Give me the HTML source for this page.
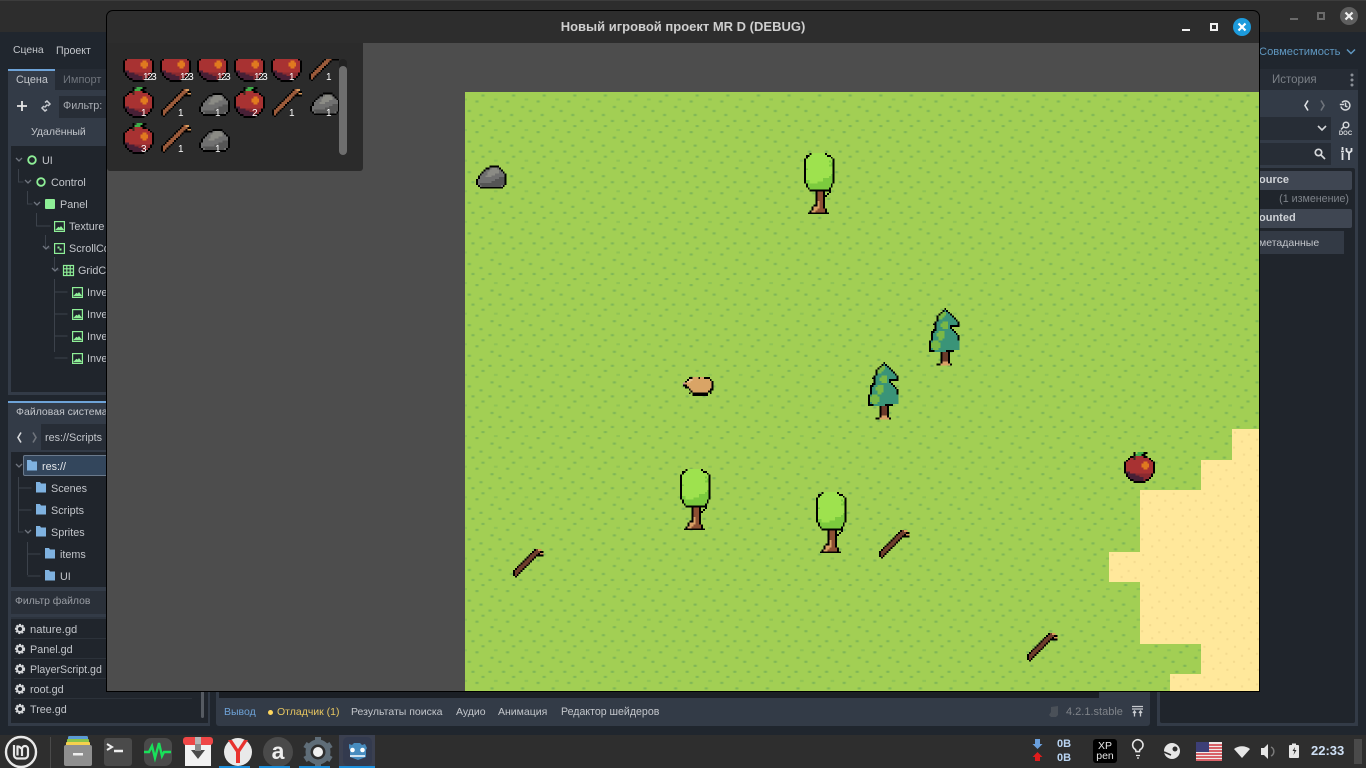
<!DOCTYPE html>
<html lang="ru"><head><meta charset="utf-8"><title>Godot</title>
<style>
html,body{margin:0;padding:0;width:1366px;height:768px;overflow:hidden;background:#20262e;font-family:"Liberation Sans","Noto Sans CJK SC",sans-serif}
.a{position:absolute}
.t{position:absolute;font-size:10.8px;line-height:14px;white-space:nowrap;color:#c3c6cb}
.d{color:#858a92}
svg{position:absolute;overflow:visible}
.s{shape-rendering:crispEdges}
.n{position:absolute;color:#fff;font-size:10px;line-height:10px}
.m{letter-spacing:-1.500px}
</style></head><body>
<svg width="0" height="0" style="position:absolute">
<defs>
<symbol id="apple" viewBox="0 0 16 16">
<g fill="none" stroke-width="1">
<path stroke="#a83232" d="M4 2.500h8M3 3.500h10M2 4.500h12M1 5.500h14M1 6.500h14M1 7.500h14M1 8.500h14M1 9.500h14M1 10.500h14M2 11.500h12M2 12.500h12M3 13.500h10M5 14.500h6"/>
<path stroke="#8a2a30" d="M3 11.500h11M3 12.500h11M6 13.500h7M9 14.500h2"/>
<path stroke="#472036" d="M1 10.500h2M2 11.500h4M2 12.500h6M3 13.500h7M5 14.500h5"/>
<path stroke="#e07a1f" d="M10 5.500h2M9 6.500h4M9 7.500h4M10 8.500h2"/>
<path stroke="#000" d="M5 .5h1M10 .5h2M5 1.500h1M9 1.500h2M3 2.500h3M10 2.500h2M2 3.500h1M13 3.500h1M1 4.500h1M14 4.500h1M0 5.500h1M15 5.500h1M0 6.500h1M15 6.500h1M0 7.500h1M15 7.500h1M0 8.500h1M15 8.500h1M0 9.500h1M15 9.500h1M0 10.500h1M15 10.500h1M1 11.500h1M14 11.500h1M1 12.500h1M14 12.500h1M2 13.500h1M13 13.500h1M3 14.500h2M11 14.500h2M5 15.500h6"/>
<path stroke="#3fae4a" d="M7 .5h3M6 1.500h3"/>
<path stroke="#3b2a20" d="M5 2.500h1M5 3.500h1"/>
</g></symbol>
<symbol id="stick" viewBox="0 0 16 16">
<g fill="none">
<path stroke="#000" d="M11 .5h1M10 1.500h1M14 1.500h2M9 2.500h1M13 2.500h1M8 3.500h1M12 3.500h4M7 4.500h1M11 4.500h1M6 5.500h1M10 5.500h1M5 6.500h1M9 6.500h1M4 7.500h1M8 7.500h1M3 8.500h1M7 8.500h1M2 9.500h1M6 9.500h1M1 10.500h1M5 10.500h1M0 11.500h1M4 11.500h1M0 12.500h1M3 12.500h1M0 13.500h1M2 13.500h1M1 14.500h1"/>
<path stroke="currentColor" d="M12 .5h3M11 1.500h3M10 2.500h3M9 3.500h3M8 4.500h3M7 5.500h3M6 6.500h3M5 7.500h3M4 8.500h3M3 9.500h3M2 10.500h3M1 11.500h3M1 12.500h2M1 13.500h1"/>
<path stroke="#d79a5c" d="M13 .5h2M14 2.500h2"/>
</g></symbol>
<symbol id="rock" viewBox="0 0 16 16">
<g fill="none">
<path stroke="#707070" d="M7 4.500h5M5 5.500h8M4 6.500h10M3 7.500h12M2 8.500h13M2 9.500h13M1 10.500h14M1 11.500h14M1 12.500h14M2 13.500h12"/>
<path stroke="#8b8b85" d="M8 4.500h3M7 5.500h5M6 6.500h6M6 7.500h4M5 8.500h3"/>
<path stroke="#555" d="M12 9.500h3M10 10.500h5M8 11.500h7M2 12.500h13M3 13.500h10"/>
<path stroke="#000" d="M7 3.500h5M5 4.500h2M12 4.500h1M4 5.500h1M13 5.500h1M3 6.500h1M14 6.500h1M2 7.500h1M15 7.500h1M1 8.500h1M15 8.500h1M1 9.500h1M15 9.500h1M0 10.500h1M15 10.500h1M0 11.500h1M15 11.500h1M0 12.500h1M15 12.500h1M1 13.500h1M14 13.500h1M2 14.500h12"/>
</g></symbol>
<symbol id="tree" viewBox="0 0 16 32">
<g fill="none">
<path stroke="#9ee24e" d="M4 .5h7M3 1.500h9M2 2.500h12M1 3.500h14M1 4.500h14M1 5.500h14M1 6.500h14M1 7.500h14M1 8.500h14M1 9.500h14M1 10.500h14M1 11.500h14M1 12.500h14M1 13.500h14"/>
<path stroke="#7ccb3e" d="M13 4.500h1M14 5.500h1M13 6.500h2M1 8.500h1M14 11.500h1M13 12.500h2M10 13.500h5M1 14.500h14M1 15.500h14M2 16.500h12M2 17.500h12M3 18.500h10"/>
<path stroke="#9ee24e" d="M3 14.500h7M3 15.500h4"/>
<path stroke="#000" d="M3 .5h1M11 .5h1M1 1.500h2M12 1.500h2M1 2.500h1M14 2.500h1M0 3.500h1M15 3.500h1M0 4.500h1M15 4.500h1M0 5.500h1M15 5.500h1M0 6.500h1M15 6.500h1M0 7.500h1M15 7.500h1M0 8.500h1M15 8.500h1M0 9.500h1M15 9.500h1M0 10.500h1M15 10.500h1M0 11.500h1M15 11.500h1M0 12.500h1M15 12.500h1M0 13.500h1M15 13.500h1M0 14.500h1M15 14.500h1M0 15.500h1M15 15.500h1M1 16.500h1M14 16.500h1M1 17.500h1M14 17.500h1M2 18.500h1M13 18.500h1M3 19.500h11"/>
<path stroke="#8c4f33" d="M7 20.500h3M7 21.500h3M7 22.500h3M7 23.500h3M7 24.500h3M8 25.500h2M8 26.500h2M8 27.500h2M8 28.500h2M7 29.500h4M6 30.500h5"/>
<path stroke="#d9a066" d="M7 25.500h1M7 26.500h1M7 27.500h1M5 28.500h3M5 29.500h2M4 30.500h2"/>
<path stroke="#000" d="M6 20.500h1M10 20.500h1M13 20.500h1M6 21.500h1M10 21.500h1M12 21.500h1M6 22.500h1M10 22.500h2M6 23.500h1M10 23.500h1M6 24.500h1M10 24.500h1M6 25.500h1M10 25.500h1M6 26.500h1M10 26.500h1M5 27.500h2M10 27.500h1M4 28.500h1M10 28.500h1M4 29.500h1M11 29.500h1M3 30.500h1M11 30.500h1M2 31.500h11"/>
</g></symbol>
<symbol id="pine" viewBox="0 0 16 32">
<g fill="none">
<path stroke="#3a9478" d="M8 1.500h1M7 2.500h3M6 3.500h5M5 4.500h7M5 5.500h8M5 6.500h9M4 7.500h11M4 8.500h11M4 9.500h7M4 10.500h7M4 11.500h8M3 12.500h10M2 13.500h12M2 14.500h13M2 15.500h13M2 16.500h13M1 17.500h15M1 18.500h15M1 19.500h15M1 20.500h15M1 21.500h15M3 22.500h6"/>
<path stroke="#7ab845" d="M7 2.500h2M6 3.500h3M5 4.500h3M5 5.500h2M7 7.500h3M6 8.500h4M6 9.500h4M7 10.500h3M5 12.500h3M4 13.500h4M4 14.500h4M5 15.500h3M5 16.500h2M2 17.500h3M1 18.500h5M1 19.500h5M1 20.500h5M2 21.500h3"/>
<path stroke="#000" d="M8 .5h1M7 1.500h1M9 1.500h1M6 2.500h1M10 2.500h1M5 3.500h1M11 3.500h1M4 4.500h1M12 4.500h1M4 5.500h1M13 5.500h1M4 6.500h1M14 6.500h1M3 7.500h1M15 7.500h1M2 8.500h2M15 8.500h1M3 9.500h1M11 9.500h5M3 10.500h1M11 10.500h1M2 11.500h2M12 11.500h1M1 12.500h2M13 12.500h1M1 13.500h1M14 13.500h1M1 14.500h1M15 14.500h1M1 15.500h1M15 15.500h1M1 16.500h1M15 16.500h1M0 17.500h1M0 18.500h1M0 19.500h1M0 20.500h1M0 21.500h1M0 22.500h3M9 22.500h4M6 23.500h1M10 23.500h1"/>
<path stroke="#6b3a2a" d="M7 23.500h3M7 24.500h3M7 25.500h3M7 26.500h3M7 27.500h3"/>
<path stroke="#000" d="M6 24.500h1M10 24.500h1M6 25.500h1M10 25.500h1M6 26.500h1M10 26.500h1M6 27.500h1M10 27.500h1M6 28.500h1M10 28.500h1M4 29.500h2M11 29.500h1"/>
<path stroke="#d9a066" d="M7 28.500h3M6 29.500h5"/>
</g></symbol>
<symbol id="potato" viewBox="0 0 16 10">
<g fill="none">
<path stroke="#d9a466" d="M5 .5h6M3 1.500h11M2 2.500h13M1 3.500h14M2 4.500h13M2 5.500h13M4 6.500h10M4 7.500h10"/>
<path stroke="#eac090" d="M3 1.500h2M2 2.500h2"/>
<path stroke="#000" d="M3 .5h2M8 .5h1M11 .5h3M2 1.500h1M14 1.500h1M1 2.500h1M15 2.500h1M15 3.500h1M0 4.500h2M15 4.500h1M15 5.500h1M1 5.500h2M15 6.500h0M3 6.500h1M14 6.500h2M4 7.500h1M13 7.500h2M3 8.500h1M5 8.500h8M14 8.500h1M5 9.500h8"/>
<path stroke="#c68f98" d="M0 3.500h1"/>
</g></symbol>
<pattern id="grass" x="465" y="92" width="30.6" height="30.6" patternUnits="userSpaceOnUse">
<rect width="30.6" height="30.6" fill="#a2cf54"/>
<g fill="#8fc355"><rect x="16" y="2.500" width="4" height="2"/><rect x="29" y="6.500" width="1.600" height="2"/><rect x="0" y="6.500" width="2" height="2"/><rect x="10" y="8.500" width="4" height="2"/><rect x="25" y="14" width="4" height="2"/><rect x="2.300" y="18" width="4" height="2"/><rect x="14" y="22" width="4" height="2"/><rect x="6" y="28" width="4" height="2"/><rect x="23" y="28" width="4" height="2"/></g>
<g fill="#7fb656"><rect x="17" y="2.500" width="2" height="2"/><rect x="11" y="8.500" width="2" height="2"/><rect x="26" y="14" width="2" height="2"/><rect x="3.300" y="18" width="2" height="2"/><rect x="15" y="22" width="2" height="2"/><rect x="7" y="28" width="2" height="2"/><rect x="24" y="28" width="2" height="2"/></g>
</pattern>
<pattern id="sand" x="465" y="92" width="30.6" height="30.6" patternUnits="userSpaceOnUse">
<rect width="30.6" height="30.6" fill="#ffe89b"/>
<g fill="#f4da8e"><rect x="4" y="3" width="2" height="2"/><rect x="18" y="5" width="2" height="2"/><rect x="26" y="10" width="2" height="2"/><rect x="11" y="12" width="2" height="2"/><rect x="3" y="18" width="2" height="2"/><rect x="20" y="19" width="2" height="2"/><rect x="13" y="25" width="2" height="2"/><rect x="27" y="26" width="2" height="2"/></g>
</pattern>
</defs></svg>

<!-- Desktop title bar -->
<div class="a" style="left:0;top:0;width:1366px;height:32px;background:#2d2d2d;border-top:1px solid #3c3c3c;box-sizing:border-box"></div>
<div class="a" style="left:1290px;top:18px;width:8px;height:2px;background:#6a6a6a"></div>
<div class="a" style="left:1317px;top:12px;width:8px;height:8px;box-sizing:border-box;border:2px solid #6a6a6a"></div>
<div class="a" style="left:1340px;top:7px;width:18px;height:18px;border-radius:50%;background:#5f5f5f"></div>
<svg style="left:1340px;top:7px" width="18" height="18"><path d="M5.500 5.500l7 7M12.500 5.500l-7 7" stroke="#f0f0f0" stroke-width="2.200"/></svg>

<!-- Editor background -->
<div class="a" style="left:0;top:32px;width:1366px;height:703px;background:#20262e"></div>
<div class="t" style="left:13px;top:44px;font-size:10.400px">Сцена</div>
<div class="t" style="left:56px;top:44px;font-size:10.600px">Проект</div>
<div class="t" style="left:1259px;top:45px;font-size:11.200px;color:#5f97c0">Совместимость</div>
<svg style="left:1346px;top:48px" width="10" height="8"><path d="M1 1.500l4 4 4-4" fill="none" stroke="#5f97c0" stroke-width="1.500"/></svg>

<!-- Left dock: scene -->
<div class="a" style="left:8px;top:69px;width:202px;height:326px;background:#333b47"></div>
<div class="a" style="left:55px;top:69px;width:155px;height:21px;background:#262c35"></div>
<div class="a" style="left:8px;top:69px;width:47px;height:2px;background:#6ea3d8"></div>
<div class="t" style="left:16px;top:73px">Сцена</div>
<div class="t d" style="left:63px;top:73px;color:#6f747c;font-size:11px">Импорт</div>
<svg style="left:16px;top:100px" width="12" height="12"><path d="M6 1v10M1 6h10" stroke="#e6e6e6" stroke-width="1.800"/></svg>
<svg style="left:40px;top:100px" width="12" height="12" fill="none" stroke="#c9ccd1" stroke-width="1.500"><path d="M5 2.500l2-1.500 3 3-2 2M7 9.500l-2 1.500-3-3 2-2M4.500 7.500l3-3"/></svg>
<div class="a" style="left:59px;top:96px;width:60px;height:22px;background:#272d36"></div>
<div class="t" style="left:63px;top:99px;color:#a9adb3">Фильтр:</div>
<div class="t" style="left:31px;top:125px;font-size:10.500px">Удалённый</div>
<div class="a" style="left:11px;top:146px;width:196px;height:246px;background:#20252c"></div>

<svg width="110" height="240" style="left:0;top:140px" fill="none" stroke="#3c424b" stroke-width="1">
<path d="M18.500 29v13h5M27.500 51v13h5M36.500 73v13h14M45.500 95v13h5M54.500 117v13h5M54.500 139v73M54.500 152h13M54.500 174h13M54.500 196h13M54.500 218h13"/>
</svg>
<svg width="110" height="220" style="left:0;top:150px" fill="none">
<path d="M16 8l3 3 3-3M25 30l3 3 3-3M34 52l3 3 3-3M43 96l3 3 3-3M52 118l3 3 3-3" stroke="#707680" stroke-width="1.300"/>
<circle cx="32" cy="10" r="3.800" stroke="#8eef97" stroke-width="1.800"/>
<circle cx="41" cy="32" r="3.800" stroke="#8eef97" stroke-width="1.800"/>
<rect x="45" y="49" width="10" height="10" rx="1" fill="#8eef97"/>
<g stroke="#8eef97" stroke-width="1.200">
<rect x="54.600" y="71.600" width="9.800" height="9.800"/><path d="M56.500 79.500l2-2 1.500 1 1-1.500 2 2.500z" fill="#8eef97"/>
<rect x="54.600" y="93.600" width="9.800" height="9.800"/><rect x="57.500" y="96.500" width="2" height="2" fill="#8eef97" stroke="none"/><rect x="59.500" y="98.500" width="2" height="2" fill="#8eef97" stroke="none"/>
<path d="M63.500 115.500h10v10h-10zM66.800 115.500v10M70.200 115.500v10M63.500 118.800h10M63.500 122.200h10"/>
<rect x="72.600" y="137.600" width="9.800" height="9.800"/><path d="M74.500 145.500l2-2 1.500 1 1-1.500 2 2.500z" fill="#8eef97"/>
<rect x="72.600" y="159.600" width="9.800" height="9.800"/><path d="M74.500 167.500l2-2 1.500 1 1-1.500 2 2.500z" fill="#8eef97"/>
<rect x="72.600" y="181.600" width="9.800" height="9.800"/><path d="M74.500 189.500l2-2 1.500 1 1-1.500 2 2.500z" fill="#8eef97"/>
<rect x="72.600" y="203.600" width="9.800" height="9.800"/><path d="M74.500 211.500l2-2 1.500 1 1-1.500 2 2.500z" fill="#8eef97"/>
</g></svg>
<div class="t" style="left:42px;top:154px">UI</div>
<div class="t" style="left:51px;top:176px">Control</div>
<div class="t" style="left:60px;top:198px">Panel</div>
<div class="t" style="left:69px;top:220px">Texture</div>
<div class="t" style="left:69px;top:242px">ScrollCo</div>
<div class="t" style="left:78px;top:264px">GridCo</div>
<div class="t" style="left:87px;top:286px">Inve</div>
<div class="t" style="left:87px;top:308px">Inve</div>
<div class="t" style="left:87px;top:330px">Inve</div>
<div class="t" style="left:87px;top:352px">Inve</div>

<!-- Left dock: filesystem -->
<div class="a" style="left:8px;top:401px;width:202px;height:325px;background:#333b47"></div>
<div class="a" style="left:8px;top:401px;width:100px;height:2px;background:#6ea3d8"></div>
<div class="t" style="left:16px;top:405px;font-size:10.500px">Файловая система</div>
<svg style="left:15px;top:431px" width="24" height="13" fill="none" stroke-width="1.600"><path d="M6 1.500l-3 5 3 5" stroke="#d8dadd"/><path d="M18 1.500l3 5-3 5" stroke="#6f747c"/></svg>
<div class="a" style="left:41px;top:424px;width:70px;height:26px;background:#272d36"></div>
<div class="t" style="left:45px;top:431px">res://Scripts</div>
<div class="a" style="left:11px;top:452px;width:196px;height:135px;background:#20252c"></div>
<div class="a" style="left:23px;top:455px;width:90px;height:21px;box-sizing:border-box;background:#33465c;border:1px solid #6b7a8c;border-radius:2px"></div>
<svg width="110" height="130" style="left:0;top:455px" fill="none">
<path d="M16 9l3 3 3-3M25 75l3 3 3-3" stroke="#707680" stroke-width="1.300"/>
<path d="M18.500 22v55h5M18.500 33h13M18.500 55h13M27.500 87v33M27.500 99h13M27.500 121h13" stroke="#3c424b"/>
<g fill="#7fb2e0"><path d="M27 5h4l1 1.500h5v9H27z"/><path d="M36 27h4l1 1.500h5v9H36z"/><path d="M36 49h4l1 1.500h5v9H36z"/><path d="M36 71h4l1 1.500h5v9H36z"/><path d="M45 93h4l1 1.500h5v9H45z"/><path d="M45 115h4l1 1.500h5v9H45z"/></g>
</svg>
<div class="t" style="left:42px;top:460px;color:#e6e8ea">res://</div>
<div class="t" style="left:51px;top:482px">Scenes</div>
<div class="t" style="left:51px;top:504px">Scripts</div>
<div class="t" style="left:51px;top:526px">Sprites</div>
<div class="t" style="left:60px;top:548px">items</div>
<div class="t" style="left:60px;top:570px">UI</div>
<div class="a" style="left:11px;top:591px;width:196px;height:23px;background:#2a3039"></div>
<div class="t" style="left:15px;top:595px;color:#9a9ea5;font-size:10.400px">Фильтр файлов</div>
<div class="a" style="left:11px;top:617px;width:197px;height:106px;background:#20252c;border-top:2px solid #2c333d;box-sizing:border-box"></div>
<div class="a" style="left:14px;top:638px;width:178px;height:1px;background:#2c323a"></div>
<div class="a" style="left:14px;top:658px;width:178px;height:1px;background:#2c323a"></div>
<div class="a" style="left:14px;top:678px;width:178px;height:1px;background:#2c323a"></div>
<div class="a" style="left:14px;top:698px;width:178px;height:1px;background:#2c323a"></div>
<div class="a" style="left:201px;top:690px;width:3px;height:28px;background:#565b62;border-radius:2px"></div>
<svg width="30" height="100" style="left:10px;top:619px">
<g fill="none" stroke="#d6d8db" stroke-dasharray="2 1.100" stroke-width="1.800"><circle cx="10" cy="10" r="4.200"/><circle cx="10" cy="30" r="4.200"/><circle cx="10" cy="50" r="4.200"/><circle cx="10" cy="70" r="4.200"/><circle cx="10" cy="90" r="4.200"/></g>
<g fill="none" stroke="#d6d8db" stroke-width="2"><circle cx="10" cy="10" r="3"/><circle cx="10" cy="30" r="3"/><circle cx="10" cy="50" r="3"/><circle cx="10" cy="70" r="3"/><circle cx="10" cy="90" r="3"/></g>
</svg>
<div class="t" style="left:30px;top:623px;font-size:11.200px">nature.gd</div>
<div class="t" style="left:30px;top:643px">Panel.gd</div>
<div class="t" style="left:30px;top:663px;font-size:10.600px">PlayerScript.gd</div>
<div class="t" style="left:30px;top:683px">root.gd</div>
<div class="t" style="left:30px;top:703px">Tree.gd</div>

<!-- Bottom panel -->
<div class="a" style="left:216px;top:685px;width:934px;height:41px;background:#333b47;border-radius:0 0 3px 3px"></div>
<div class="a" style="left:219px;top:685px;width:880px;height:13px;background:#1b1f25"></div>
<div class="t" style="left:224px;top:705px;font-size:10.500px;color:#6ea3d8">Вывод</div>
<div class="a" style="left:268px;top:710px;width:5px;height:5px;border-radius:50%;background:#ffd75e"></div>
<div class="t" style="left:277px;top:705px;font-size:10.500px;color:#e6c560">Отладчик (1)</div>
<div class="t" style="left:351px;top:705px;font-size:10.500px">Результаты поиска</div>
<div class="t" style="left:456px;top:705px;font-size:10.500px">Аудио</div>
<div class="t" style="left:498px;top:705px;font-size:10.500px">Анимация</div>
<div class="t" style="left:561px;top:705px;font-size:10.600px">Редактор шейдеров</div>
<svg style="left:1048px;top:705px" width="12" height="13"><path d="M3 2l7-1v9l-2 2H3l-2-2 2-3z" fill="#4a5058"/></svg>
<div class="t" style="left:1066px;top:705px;font-size:11px;color:#7f8389">4.2.1.stable</div>
<svg style="left:1131px;top:705px" width="13" height="13" fill="none" stroke="#c9ccd1" stroke-width="1.300"><path d="M1 1.500h11M1 4h11M3.500 5.500v6M2 8l1.500-2L5 8M9.500 5.500v6M8 8l1.500-2L11 8"/></svg>

<!-- Right dock -->
<div class="a" style="left:1157px;top:69px;width:201px;height:657px;background:#333b47"></div>
<div class="a" style="left:1157px;top:69px;width:201px;height:21px;background:#262c35"></div>
<div class="t d" style="left:1272px;top:73px;font-size:11.500px;color:#7b8087">История</div>
<svg style="left:1350px;top:72px" width="4" height="14" fill="#8a8f96"><circle cx="2" cy="3" r="1.500"/><circle cx="2" cy="8" r="1.500"/><circle cx="2" cy="13" r="1.500"/></svg>
<svg style="left:1302px;top:99px" width="26" height="13" fill="none" stroke-width="1.600"><path d="M6 1.500l-3 5 3 5" stroke="#e0e2e5"/><path d="M19 1.500l3 5-3 5" stroke="#6f747c"/></svg>
<svg style="left:1339px;top:99px" width="13" height="13" fill="none" stroke="#d6d8db" stroke-width="1.500"><path d="M3 3.500a4.500 4.500 0 1 1-1 4M.8 5.500h4.200M6.500 3.500v3.500l2 1"/></svg>
<div class="a" style="left:1240px;top:117px;width:91px;height:23px;background:#272d36"></div>
<svg style="left:1317px;top:125px" width="10" height="7"><path d="M1 1l4 4 4-4" fill="none" stroke="#d6d8db" stroke-width="1.600"/></svg>
<svg style="left:1339px;top:121px" width="13" height="14"><circle cx="7" cy="4" r="2.800" fill="none" stroke="#d6d8db" stroke-width="1.500"/><path d="M4.500 6l-2.500 2.500" stroke="#d6d8db" stroke-width="1.500"/><text x="6.500" y="14" text-anchor="middle" font-family="Liberation Sans" font-size="6" font-weight="bold" fill="#d6d8db">DOC</text></svg>
<div class="a" style="left:1240px;top:143px;width:91px;height:22px;background:#272d36"></div>
<svg style="left:1314px;top:148px" width="12" height="12" fill="none" stroke="#d6d8db" stroke-width="1.700"><circle cx="4.500" cy="4.500" r="3.200"/><path d="M7 7l4 4"/></svg>
<svg style="left:1340px;top:147px" width="12" height="13" fill="none" stroke="#e0e2e5" stroke-width="1.800"><path d="M2.500 0v3M2.500 6v7M1 4.500h3M9 6v7M6.500 1v3l2.500 2 2.500-2V1"/></svg>
<div class="a" style="left:1160px;top:168px;width:195px;height:555px;background:#20252c;border-radius:2px"></div>
<div class="a" style="left:1225px;top:171px;width:127px;height:19px;background:#3f4652;border-radius:2px"></div>
<div class="t" style="left:1259px;top:173px;font-weight:bold;font-size:11px;color:#d0d3d7">ource</div>
<div class="t" style="right:17px;top:192px;color:#7e838a;font-size:10.700px">(1 изменение)</div>
<div class="a" style="left:1225px;top:209px;width:127px;height:19px;background:#3f4652;border-radius:2px"></div>
<div class="t" style="left:1259px;top:211px;font-weight:bold;font-size:11px;color:#d0d3d7">ounted</div>
<div class="a" style="left:1225px;top:231px;width:119px;height:23px;background:#333a45"></div>
<div class="t" style="left:1259px;top:236px;font-size:10.500px">метаданные</div>

<!-- Game window -->
<div class="a" style="left:106px;top:10px;width:1154px;height:682px;background:#000;border-radius:7px 7px 0 0"></div>
<div class="a" style="left:107px;top:11px;width:1152px;height:32px;background:#2d2d2d;border-radius:6px 6px 0 0"></div>
<div class="a" style="left:107px;top:43px;width:1152px;height:648px;background:#4d4d4d"></div>
<div class="a" style="left:107px;top:19px;width:1152px;height:16px;text-align:center;font-size:13px;line-height:16px;font-weight:bold;color:#cfcfcf">Новый игровой проект MR D (DEBUG)</div>
<div class="a" style="left:1182px;top:29px;width:8px;height:2px;background:#f0f0f0"></div>
<div class="a" style="left:1210px;top:23px;width:8px;height:8px;box-sizing:border-box;border:2px solid #f0f0f0"></div>
<div class="a" style="left:1233px;top:18px;width:18px;height:18px;border-radius:50%;background:#1d9bdc"></div>
<svg style="left:1233px;top:18px" width="18" height="18"><path d="M5.500 5.500l7 7M12.500 5.500l-7 7" stroke="#fff" stroke-width="2.200"/></svg>

<!-- Game world -->
<svg style="left:0;top:0" width="1366" height="768" class="s">
<rect x="465" y="92" width="794" height="599" fill="url(#grass)"/>
<path d="M1259 429H1232V460H1201V490H1140V552H1109V582H1140V644H1201V674H1170V691H1259Z" fill="url(#sand)"/>
<use href="#rock" x="476" y="160" width="30.600" height="30.600"/>
<use href="#tree" x="804" y="153" width="30.600" height="61.200"/>
<use href="#tree" x="680" y="469" width="30.600" height="61.200"/>
<use href="#tree" x="816" y="492" width="30.600" height="61.200"/>
<use href="#pine" x="929" y="308" width="30.600" height="61.200"/>
<use href="#pine" x="868" y="362" width="30.600" height="61.200"/>
<use href="#potato" x="683" y="377" width="30.600" height="19.100"/>
<use href="#apple" x="1124" y="452" width="31" height="31"/>
<g color="#6f3d2c">
<use href="#stick" x="513" y="549" width="30.600" height="30.600"/>
<use href="#stick" x="879" y="530" width="30.600" height="30.600"/>
<use href="#stick" x="1027" y="633" width="30.600" height="30.600"/>
</g>
</svg>

<!-- Inventory panel -->
<div class="a" style="left:107px;top:43px;width:256px;height:128px;background:#2b2b2b;border-radius:0 0 3px 3px"></div>
<div class="a" style="left:107px;top:59px;width:232px;height:100px;overflow:hidden">
<svg class="s" style="left:-107px;top:-59px;color:#9c5b3b" width="400" height="200">
<use href="#apple" x="123" y="51" width="31" height="31"/><use href="#apple" x="160" y="51" width="31" height="31"/><use href="#apple" x="197" y="51" width="31" height="31"/><use href="#apple" x="234" y="51" width="31" height="31"/><use href="#apple" x="271" y="51" width="31" height="31"/><use href="#stick" x="309" y="53" width="30" height="30"/>
<use href="#apple" x="123" y="87" width="31" height="31"/><use href="#stick" x="161" y="89" width="30" height="30"/><use href="#rock" x="199" y="87" width="31" height="31"/><use href="#apple" x="234" y="87" width="31" height="31"/><use href="#stick" x="272" y="89" width="30" height="30"/><use href="#rock" x="310" y="87" width="30" height="30"/>
<use href="#apple" x="123" y="123" width="31" height="31"/><use href="#stick" x="161" y="125" width="30" height="30"/><use href="#rock" x="199" y="123" width="31" height="31"/>
</svg></div>
<div class="n m" style="left:143px;top:73px">123</div><div class="n m" style="left:180px;top:73px">123</div><div class="n m" style="left:217px;top:73px">123</div><div class="n m" style="left:254px;top:73px">123</div><div class="n" style="left:289px;top:73px">1</div><div class="n" style="left:326px;top:73px">1</div>
<div class="n" style="left:141px;top:109px">1</div><div class="n" style="left:178px;top:109px">1</div><div class="n" style="left:215px;top:109px">1</div><div class="n" style="left:252px;top:109px">2</div><div class="n" style="left:289px;top:109px">1</div><div class="n" style="left:326px;top:109px">1</div>
<div class="n" style="left:141px;top:145px">3</div><div class="n" style="left:178px;top:145px">1</div><div class="n" style="left:215px;top:145px">1</div>
<div class="a" style="left:339px;top:59px;width:8px;height:96px;background:#222;border-radius:4px"></div>
<div class="a" style="left:339px;top:66px;width:8px;height:89px;background:#6e6e6e;border-radius:4px"></div>

<!-- Taskbar -->
<div class="a" style="left:0;top:735px;width:1366px;height:33px;background:#2e2e2e"></div>
<svg style="left:0;top:735px" width="400" height="33" fill="none">
<circle cx="21" cy="17" r="15" stroke="#e8e8e8" stroke-width="2.400"/>
<path d="M14 10v10a3.500 3.500 0 0 0 3.500 3.500h7a3.500 3.500 0 0 0 3.500-3.500v-6a3 3 0 0 0-6 0v7M21 14a3 3 0 0 0-3.500-2.500v9" stroke="#e8e8e8" stroke-width="2.200"/>
<path d="M50.500 2v31" stroke="#4a4a4a"/>
<rect x="68" y="1" width="20" height="5" rx="1.500" fill="#5b9bd5"/><rect x="67" y="4" width="22" height="4" rx="1" fill="#8bc34a"/><rect x="66" y="7" width="24" height="4" rx="1" fill="#f6d04d"/>
<rect x="64" y="10" width="28" height="21" rx="2" fill="#8f8f8f"/><rect x="73" y="18" width="10" height="2.500" fill="#eee"/>
<rect x="104" y="3" width="28" height="28" rx="3" fill="#4a4a4a"/><path d="M107 9l5 3-5 3" stroke="#eee" stroke-width="2"/><path d="M114 16h9" stroke="#eee" stroke-width="2.500"/>
<rect x="144" y="3" width="28" height="28" rx="7" fill="#4a4a4a"/><path d="M144 17h5l3-6 3 12 4-15 3 13 2-4h7" stroke="#19e05a" stroke-width="2.400"/>
<rect x="185" y="5" width="26" height="26" fill="#f2f2f2"/><rect x="183" y="2" width="30" height="8" rx="3" fill="#ef4646"/><rect x="195" y="2" width="6" height="8" fill="#b5b5b5"/><path d="M191 15h14l-7 9z" fill="#4a4a4a"/><rect x="195" y="9" width="6" height="7" fill="#8a8a8a"/>
<circle cx="238" cy="17" r="14" fill="#e9e9e9"/><path d="M228 5l8 12v11h4V17l8-12h-4l-6 9-6-9z" fill="#e8322e"/>
<circle cx="278" cy="17" r="15" fill="#4a4a4a"/>
<circle cx="318" cy="17" r="10" stroke="#5f6d78" stroke-width="5"/><path d="M318 2v5M318 27v5M305 9.500l4 2.500M331 24.500l-4-2.500M305 24.500l4-2.500M331 9.500l-4 2.500" stroke="#5f6d78" stroke-width="6"/><circle cx="318" cy="17" r="5" fill="#f0f0f0"/>
<rect x="339" y="0" width="36" height="33" fill="#3b4050"/><rect x="343" y="2" width="29" height="29" rx="5" fill="#333a4e"/>
<path d="M349 9l3 1 2-2h6l2 2 3-1 2 4-1 2v7l-8 3-8-3v-7l-1-2z" fill="#478cbf"/><circle cx="352.500" cy="15" r="2.300" fill="#fff"/><circle cx="362.500" cy="15" r="2.300" fill="#fff"/><path d="M350 21h15" stroke="#fff" stroke-width="1.500"/>
<path d="M219 32h31M259 32h31M299 32h31M339 32h36" stroke="#1d8fdc" stroke-width="2"/>
</svg>
<div class="a" style="left:263px;top:739px;width:30px;text-align:center;font-size:23px;line-height:24px;font-weight:bold;color:#eee">a</div>

<svg style="left:1030px;top:735px" width="336" height="33" fill="none">
<path d="M5.500 4h5v5h2.500l-5.000 5-5-5h2.500z" transform="translate(-.5 0)" fill="#6a9fdc"/>
<path d="M7.500 17l5 5h-2.500v4h-5v-4h-2.500z" fill="#e01c1c"/>
<rect x="63" y="4" width="24" height="24" rx="3" fill="#000"/>
<path d="M113 14a5.200 5.200 0 1 0-7.500 4.600l.5 2h3.500l.5-2a5.200 5.200 0 0 0 3-4.600z" transform="translate(0 -4)" stroke="#e6e6e6" stroke-width="1.600"/><path d="M106 19.500h4M107 22h2" transform="translate(0 1)" stroke="#e6e6e6" stroke-width="1.300"/>
<circle cx="142" cy="16" r="8" fill="#e6e6e6"/><circle cx="145" cy="14" r="2.500" fill="#2e2e2e"/><path d="M134 17l7 3" stroke="#2e2e2e" stroke-width="1.500"/>
<rect x="166" y="7" width="26" height="19" fill="#f0eaea"/><path d="M166 10h26M166 13h26M166 16h26M166 19h26M166 22h26M166 25h26" stroke="#d0343c" stroke-width="1.400"/><rect x="166" y="7" width="13" height="10" fill="#3d3f77"/>
<path d="M204 14a13 13 0 0 1 16 0l-8 9z" fill="#e6e6e6"/>
<path d="M231 13h3l4-4v15l-4-4h-3z" fill="#e6e6e6"/><path d="M241 12a5 5 0 0 1 0 9" stroke="#7a7a7a" stroke-width="1.500"/>
<rect x="259" y="10" width="10" height="13" rx="1" fill="#e6e6e6"/><rect x="262" y="8.500" width="4" height="2" fill="#e6e6e6"/><path d="M265 12l-2.500 4h2l-1 4 3-5h-2z" fill="#2e2e2e"/>
<rect x="324" y="4" width="8" height="25" fill="#4a4a4a"/>
</svg>
<div class="t" style="left:1057px;top:737px;font-size:11px;font-weight:bold;color:#b9d4f2">0B</div>
<div class="t" style="left:1057px;top:751px;font-size:11px;font-weight:bold;color:#b9d4f2">0B</div>
<div class="a" style="left:1093px;top:741px;width:24px;text-align:center;font-size:10.500px;line-height:10px;color:#e6e6e6">XP<br>pen</div>
<div class="t" style="left:1311px;top:744px;font-size:13px;font-weight:bold;color:#cfe0f5">22:33</div>
</body></html>
